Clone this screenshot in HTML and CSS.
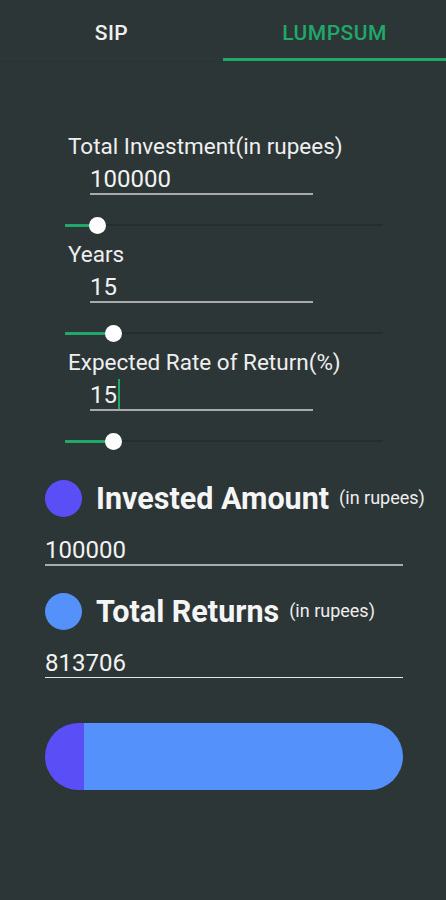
FILE: index.html
```html
<!DOCTYPE html>
<html>
<head>
<meta charset="utf-8">
<link rel="stylesheet" href="styles.css">
</head>
<body>
<div class="tabs">
  <div class="tab">SIP</div>
  <div class="tab active">LUMPSUM</div>
</div>

<div class="form">
  <div class="field">
    <div class="label">Total Investment(in rupees)</div>
    <div class="input">100000</div>
    <div class="slider"><div class="fill" style="width:32px"></div><div class="thumb"></div><div class="rest"></div></div>
  </div>
  <div class="field">
    <div class="label">Years</div>
    <div class="input">15</div>
    <div class="slider"><div class="fill" style="width:48px"></div><div class="thumb"></div><div class="rest"></div></div>
  </div>
  <div class="field">
    <div class="label">Expected Rate of Return(%)</div>
    <div class="input">15<span class="caret"></span></div>
    <div class="slider"><div class="fill" style="width:48px"></div><div class="thumb"></div><div class="rest"></div></div>
  </div>
</div>

<div class="results">
  <div class="res-head">
    <span class="dot purple"></span>
    <span class="res-title">Invested Amount</span>
    <span class="res-unit">(in rupees)</span>
  </div>
  <div class="res-value">100000</div>

  <div class="res-head second">
    <span class="dot blue"></span>
    <span class="res-title">Total Returns</span>
    <span class="res-unit">(in rupees)</span>
  </div>
  <div class="res-value light">813706</div>

  <div class="bar">
    <div class="bar-invested" style="width:39px"></div>
    <div class="bar-returns"></div>
  </div>
</div>
</body>
</html>
```

FILE: styles.css
```css
html, body {
  margin: 0;
  padding: 0;
  background: #2d3637;
}
body {
  width: 446px;
  height: 900px;
  font-family: Roboto, "Liberation Sans", sans-serif;
  color: #f2f2f2;
  overflow: hidden;
}
.tabs {
  display: flex;
  height: 61px;
  border-bottom: 1px solid #2a3233;
}
.tab {
  flex: 1;
  display: flex;
  align-items: center;
  justify-content: center;
  font-size: 21px;
  font-weight: 500;
  letter-spacing: 0.5px;
  color: #f0f0f0;
  padding-top: 5px;
  box-sizing: border-box;
}
.tab.active {
  color: #1fa86a;
  border-bottom: 3px solid #1fa86a;
  padding-top: 8px;
}
.form {
  margin-top: 72px;
}
.field {
  display: flex;
  flex-direction: column;
  margin-bottom: 7px;
}
.label {
  margin-left: 68px;
  font-size: 22.5px;
  line-height: 24px;
  height: 24px;
  color: #efefef;
  white-space: nowrap;
}
.input {
  margin-left: 90px;
  margin-top: 9px;
  width: 223px;
  font-size: 24px;
  line-height: 24px;
  height: 24px;
  padding-bottom: 2px;
  border-bottom: 2px solid #a9abab;
  color: #f2f2f2;
  display: flex;
  align-items: center;
}
.caret {
  display: inline-block;
  width: 2px;
  height: 30px;
  margin-left: 1px;
  margin-top: -2px;
  background: #1fa86a;
}
.slider {
  margin-left: 65px;
  width: 318px;
  height: 20px;
  margin-top: 20px;
  display: flex;
  align-items: center;
}
.fill {
  height: 3px;
  background: #1fa86a;
}
.thumb {
  width: 17px;
  height: 17px;
  border-radius: 50%;
  background: #ffffff;
  margin-left: -8px;
  margin-right: -8px;
  position: relative;
  z-index: 1;
}
.rest {
  flex: 1;
  height: 2px;
  background: #262d2e;
}
.results {
  margin-left: 45px;
  width: 358px;
  margin-top: 28px;
}
.res-head {
  display: flex;
  align-items: center;
  height: 38px;
  white-space: nowrap;
}
.res-head.second {
  margin-top: 26px;
}
.dot {
  width: 37px;
  height: 37px;
  border-radius: 50%;
  flex: none;
}
.dot.purple { background: #5a4ff7; }
.dot.blue { background: #5591fb; }
.res-title {
  margin-left: 14px;
  font-size: 30.5px;
  font-weight: 700;
  color: #f5f5f5;
}
.res-unit {
  margin-left: 10px;
  font-size: 18px;
  color: #eeeeee;
  position: relative;
  top: -1px;
}
.res-value {
  margin-top: 21px;
  font-size: 24px;
  line-height: 24px;
  height: 24px;
  padding-bottom: 2px;
  border-bottom: 2px solid #a9abab;
  color: #f2f2f2;
}
.res-value.light {
  border-bottom: 1.5px solid #e6e6e6;
}
.bar {
  margin-top: 45px;
  height: 67px;
  border-radius: 34px;
  overflow: hidden;
  display: flex;
}
.bar-invested {
  background: #5a4ff7;
}
.bar-returns {
  flex: 1;
  background: #5591fb;
}
```
